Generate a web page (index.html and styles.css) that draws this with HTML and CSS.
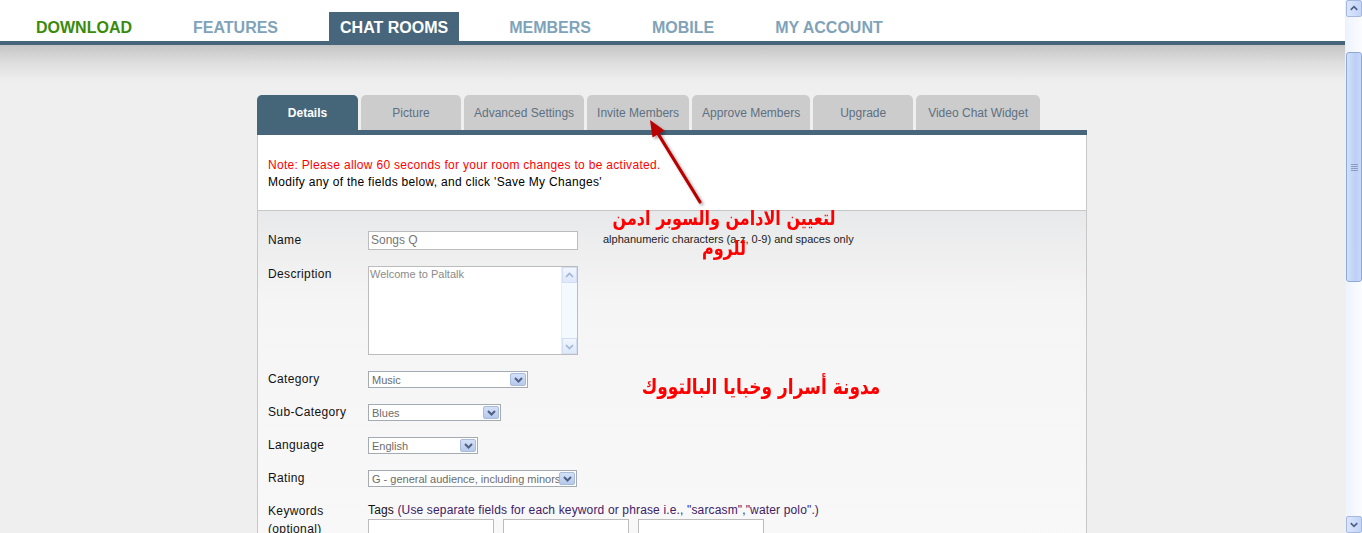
FILE: index.html
```html
<!DOCTYPE html>
<html lang="en">
<head>
<meta charset="utf-8">
<title>Chat Rooms - Details</title>
<link rel="stylesheet" href="styles.css">
</head>
<body>
<div class="viewport">
  <div class="page">
    <header class="topnav">
      <a class="nav-item nav-download">DOWNLOAD</a>
      <a class="nav-item">FEATURES</a>
      <a class="nav-item nav-active">CHAT ROOMS</a>
      <a class="nav-item">MEMBERS</a>
      <a class="nav-item">MOBILE</a>
      <a class="nav-item">MY ACCOUNT</a>
    </header>
    <div class="navline"></div>
    <div class="shade"></div>

    <main class="room">
      <ul class="tabs">
        <li class="tab tab-active">Details</li>
        <li class="tab">Picture</li>
        <li class="tab">Advanced Settings</li>
        <li class="tab">Invite Members</li>
        <li class="tab">Approve Members</li>
        <li class="tab">Upgrade</li>
        <li class="tab tab-wide">Video Chat Widget</li>
      </ul>
      <div class="panel">
        <div class="notice">
          <p class="note-red">Note: Please allow 60 seconds for your room changes to be activated.</p>
          <p class="note-black">Modify any of the fields below, and click 'Save My Changes'</p>
        </div>
        <form class="fields">
          <div class="row row-name">
            <label class="lbl">Name</label>
            <div class="input name-input">Songs Q</div>
            <span class="hint">alphanumeric characters (a-z, 0-9) and spaces only</span>
          </div>
          <div class="row">
            <label class="lbl lbl-top">Description</label>
            <div class="textarea">
              <div class="ta-text">Welcome to Paltalk</div>
              <div class="ta-scroll">
                <span class="ta-btn"><svg width="13" height="13" viewBox="0 0 13 13"><path d="M3 8 L6.5 4.5 L10 8" fill="none" stroke="#9fb4d6" stroke-width="1.6"/></svg></span>
                <span class="ta-track"></span>
                <span class="ta-btn"><svg width="13" height="13" viewBox="0 0 13 13"><path d="M3 5 L6.5 8.5 L10 5" fill="none" stroke="#9fb4d6" stroke-width="1.6"/></svg></span>
              </div>
            </div>
          </div>
          <div class="row">
            <label class="lbl lbl-sel">Category</label>
            <div class="select w-cat"><span class="sel-val">Music</span><span class="dd"><svg width="11" height="10" viewBox="0 0 11 10"><path d="M2 3 L5.5 6.5 L9 3" fill="none" stroke="#4d6185" stroke-width="2"/></svg></span></div>
          </div>
          <div class="row">
            <label class="lbl lbl-sel">Sub-Category</label>
            <div class="select w-sub"><span class="sel-val">Blues</span><span class="dd"><svg width="11" height="10" viewBox="0 0 11 10"><path d="M2 3 L5.5 6.5 L9 3" fill="none" stroke="#4d6185" stroke-width="2"/></svg></span></div>
          </div>
          <div class="row">
            <label class="lbl lbl-sel">Language</label>
            <div class="select w-lang"><span class="sel-val">English</span><span class="dd"><svg width="11" height="10" viewBox="0 0 11 10"><path d="M2 3 L5.5 6.5 L9 3" fill="none" stroke="#4d6185" stroke-width="2"/></svg></span></div>
          </div>
          <div class="row row-rating">
            <label class="lbl lbl-sel">Rating</label>
            <div class="select w-rate"><span class="sel-val">G - general audience, including minors</span><span class="dd"><svg width="11" height="10" viewBox="0 0 11 10"><path d="M2 3 L5.5 6.5 L9 3" fill="none" stroke="#4d6185" stroke-width="2"/></svg></span></div>
          </div>
          <div class="row">
            <label class="lbl lbl-kw">Keywords<br>(optional)</label>
            <div class="tags">
              <div class="tags-head"><span class="tags-word">Tags</span> <span class="tags-help">(Use separate fields for each keyword or phrase i.e., "sarcasm","water polo".)</span></div>
              <div class="tag-inputs">
                <div class="input tag-input"></div>
                <div class="input tag-input"></div>
                <div class="input tag-input"></div>
              </div>
            </div>
          </div>
        </form>
      </div>
    </main>

    <div class="annot annot-admin" dir="rtl">لتعيين الادامن والسوبر ادمن<br>للروم</div>
    <div class="annot annot-blog" dir="rtl">مدونة أسرار وخبايا البالتووك</div>
    <svg class="arrow" width="90" height="110" viewBox="0 0 90 110">
      <defs>
        <filter id="sh" x="-50%" y="-50%" width="200%" height="200%">
          <feDropShadow dx="2" dy="2" stdDeviation="1.5" flood-color="#000" flood-opacity="0.35"/>
        </filter>
      </defs>
      <g filter="url(#sh)">
        <line x1="70" y1="92" x2="27" y2="22" stroke="#b80000" stroke-width="3.2" stroke-linecap="round"/>
        <polygon points="20,10 34.5,20.5 22.5,27.5" fill="#b80000"/>
      </g>
    </svg>
  </div>

  <div class="scrollbar">
    <div class="sb-btn"><svg width="15" height="15" viewBox="0 0 15 15"><path d="M4 9 L7.5 5.5 L11 9" fill="none" stroke="#4d6185" stroke-width="1.8"/></svg></div>
    <div class="sb-gap"></div>
    <div class="sb-thumb"><svg width="9" height="8" viewBox="0 0 9 8"><path d="M1 1.5 H8 M1 3.5 H8 M1 5.5 H8 M1 7.5 H8" stroke="#8a9cc0" stroke-width="1"/></svg></div>
    <div class="sb-fill"></div>
    <div class="sb-btn"><svg width="15" height="15" viewBox="0 0 15 15"><path d="M4 6 L7.5 9.5 L11 6" fill="none" stroke="#4d6185" stroke-width="1.8"/></svg></div>
  </div>
</div>
</body>
</html>
```

FILE: styles.css
```css
* { box-sizing: border-box; }
html, body { margin: 0; padding: 0; height: 533px; overflow: hidden; }
body { font-family: "Liberation Sans", Arial, sans-serif; background: #efefef; }

.viewport { display: flex; height: 533px; }
.page { flex: 1; position: relative; background: #efefef; }

/* top navigation */
.topnav {
  height: 41px;
  background: #fff;
  display: flex;
  align-items: flex-end;
  gap: 39px;
  padding-left: 25px;
}
.nav-item {
  height: 29px;
  line-height: 31px;
  padding: 0 11px;
  font-weight: bold;
  font-size: 16px;
  color: #80a3b9;
  text-decoration: none;
  white-space: nowrap;
}
.nav-download { color: #3a8b0b; }
.nav-active { background: #47667b; color: #fff; margin-left: 1px; }
.navline { height: 4px; background: #47667b; }
.shade { height: 50px; background: linear-gradient(#c4c4c4, #dedede 35%, #efefef 75%); }

/* room editor */
.room { width: 830px; margin-left: 257px; }
.tabs { list-style: none; margin: 0; padding: 0; display: flex; gap: 3px; height: 35px; }
.tab {
  min-width: 100px;
  padding: 0 10px;
  height: 35px;
  line-height: 36px;
  text-align: center;
  font-size: 12px;
  color: #5d7083;
  background: #cccccc;
  border-radius: 5px 5px 0 0;
  white-space: nowrap;
}
.tab-active { background: #456579; color: #fff; font-weight: bold; min-width: 101px; }
.tab-wide { padding: 0 12px; }

.panel { border-top: 5px solid #47667b; }
.notice {
  height: 76px;
  background: #fff;
  border-left: 1px solid #c8c8c8;
  border-right: 1px solid #c8c8c8;
  border-bottom: 1px solid #c8c8c8;
  padding: 22px 10px 0 10px;
}
.notice p { margin: 0; font-size: 12px; line-height: 17px; letter-spacing: 0.3px; }
.note-red { color: #ff0000; }
.note-black { color: #000; }

.fields {
  margin: 0;
  height: 330px;
  background: linear-gradient(#e8e9ea, #f5f5f5 90px, #f8f8f8);
  border-left: 1px solid #c8c8c8;
  border-right: 1px solid #c8c8c8;
  padding: 20px 0 0 10px;
}
.row { display: flex; align-items: flex-start; margin-bottom: 16px; }
.row-rating { margin-bottom: 15px; }
.lbl { width: 100px; flex: none; font-size: 12px; color: #111; line-height: 19px; letter-spacing: 0.35px; }
.lbl-top { line-height: 17px; }
.lbl-sel { line-height: 17px; }
.lbl-kw { line-height: 18px; }

.input {
  height: 19px;
  border: 1px solid #bcbcbc;
  background: #fff;
  font-size: 12px;
  color: #777;
  line-height: 17px;
  padding-left: 2px;
}
.name-input { width: 210px; }
.hint { margin-left: 25px; font-size: 11px; color: #222; line-height: 17px; }

.textarea {
  width: 210px;
  height: 89px;
  border: 1px solid #bcbcbc;
  background: #fff;
  display: flex;
}
.ta-text { flex: 1; font-size: 11px; color: #8a8a8a; padding: 0 0 0 1px; line-height: 14px; }
.ta-scroll { width: 16px; display: flex; flex-direction: column; background: #f4f8ff; border-left: 1px solid #e6eefb; }
.ta-btn {
  height: 16px;
  display: flex; align-items: center; justify-content: center;
  background: linear-gradient(#f2f6ff, #dde8fb);
  border: 1px solid #d3def3;
}
.ta-track { flex: 1; }

.select {
  height: 17px;
  border: 1px solid #a5abb3;
  background: #fff;
  display: flex;
  align-items: center;
  padding: 0 1px;
}
.w-cat { width: 160px; }
.w-sub { width: 133px; }
.w-lang { width: 110px; }
.w-rate { width: 209px; }
.sel-val { flex: 1; font-size: 11px; color: #6b6b6b; padding-left: 2px; white-space: nowrap; overflow: hidden; line-height: 14px; }
.dd {
  width: 16px; height: 13px;
  display: flex; align-items: center; justify-content: center;
  background: linear-gradient(#d4e0f7, #b6c9ec);
  border: 1px solid #a8bbd9;
  border-radius: 2px;
}

.tags { display: flex; flex-direction: column; }
.tags-head { font-size: 12px; line-height: 17px; white-space: nowrap; letter-spacing: 0.15px; }
.tags-word { color: #111; }
.tags-help { color: #3e2168; }
.tag-inputs { display: flex; gap: 9px; }
.tag-input { width: 126px; height: 30px; }

/* annotations overlaid on the screenshot */
.annot {
  position: absolute;
  color: #ff0000;
  font-family: "DejaVu Sans", sans-serif;
  font-weight: bold;
  text-align: center;
  white-space: nowrap;
  transform: scaleY(1.25);
}
.annot-admin { left: 604px; top: 210px; width: 240px; font-size: 16px; line-height: 24px; }
.annot-blog { left: 633px; top: 374px; width: 256px; font-size: 17px; line-height: 24px; }
.arrow { position: absolute; left: 630px; top: 110px; }

/* window scrollbar */
.scrollbar {
  width: 17px;
  flex: none;
  display: flex;
  flex-direction: column;
  background: linear-gradient(to right, #eef3fc, #fbfcff);
  border-left: 1px solid #f0f0f0;
}
.sb-btn {
  height: 17px;
  display: flex; align-items: center; justify-content: center;
  background: linear-gradient(to right, #dbe6fc, #c3d4f7);
  border: 1px solid #a6b8dd;
  border-radius: 2px;
}
.sb-gap { height: 35px; }
.sb-thumb {
  height: 230px;
  display: flex; align-items: center; justify-content: center;
  background: linear-gradient(to right, #d2e0fb, #bccff5 60%, #c9d8f8);
  border: 1px solid #90a8d6;
  border-radius: 3px;
}
.sb-fill { flex: 1; }
```
